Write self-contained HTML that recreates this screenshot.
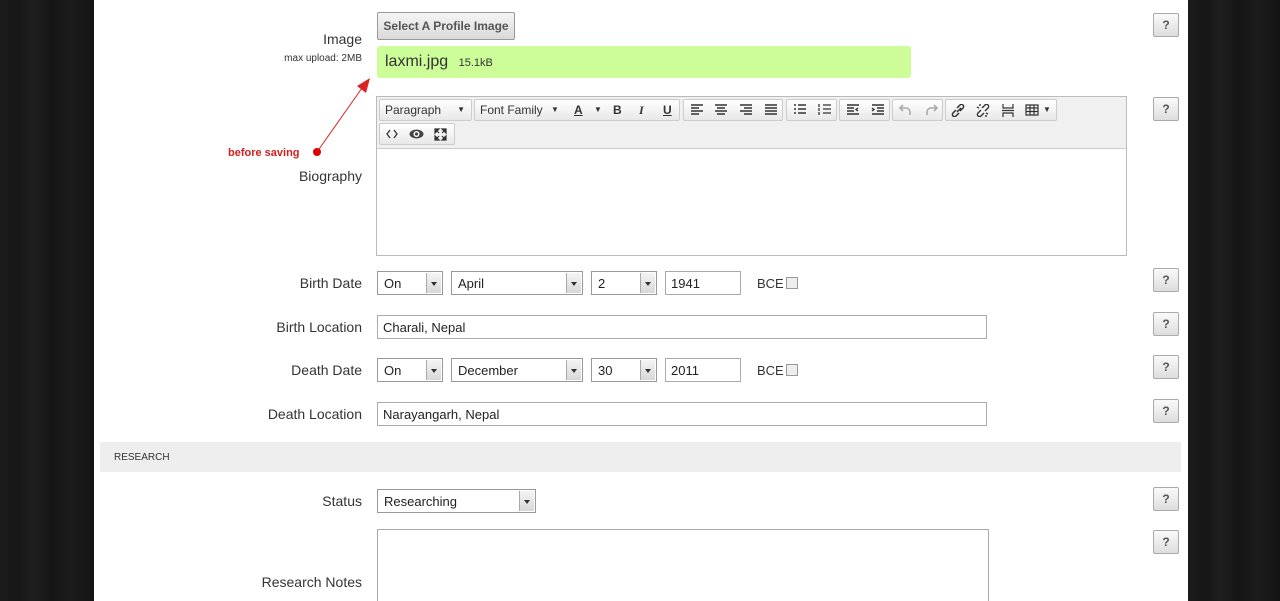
<!DOCTYPE html>
<html><head><style>
*{box-sizing:border-box}
html,body{margin:0;width:1280px;height:601px;overflow:hidden}
body{background:#1b1a1a;font-family:"Liberation Sans",sans-serif;position:relative}
#w{position:absolute;left:0;top:0;width:1280px;height:601px;overflow:hidden}
.wood{position:absolute;top:0;bottom:0;background:linear-gradient(90deg,#1c1b1b 0,#181717 20%,#201f1f 35%,#161515 55%,#1d1c1c 75%,#141313 100%)}
.main{position:absolute;left:94px;top:0;width:1094px;height:601px;background:#fff}
.a{position:absolute}
.lbl{position:absolute;right:918px;font-size:14px;color:#333;text-align:right;white-space:nowrap}
.help{position:absolute;left:1153px;width:26px;height:24px;border:1px solid #aaa;border-radius:2px;background:linear-gradient(#fafafa,#ddd);font-size:12px;font-weight:bold;color:#555;text-align:center;line-height:22px}
.inp{position:absolute;height:24px;border:1px solid #aaa;background:#fff;font-size:13px;color:#222;padding:4px 5px;line-height:15px}
.sel{position:absolute;height:24px;border:1px solid #999;background:#fff;font-size:13px;color:#222;padding:4px 6px;line-height:15px}
.sel:after{content:"";position:absolute;right:1px;top:1px;width:14px;height:20px;background:linear-gradient(#f4f4f4,#d8d8d8);border-left:1px solid #aaa}
.sel:before{content:"";position:absolute;right:5px;top:10px;border:3px solid transparent;border-top:4px solid #333;z-index:2}
.tb{position:absolute;height:22px;border:1px solid #ccc;border-radius:2px;background:linear-gradient(#fff,#e8e8e8);font-size:12px;color:#333;line-height:20px;white-space:nowrap;overflow:hidden}
.tb svg{position:absolute;top:4px}
</style></head><body><div id="w">
<div class="wood" style="left:0;width:94px"></div>
<div class="wood" style="left:1188px;width:92px"></div>
<div class="main"></div>

<div class="a" style="left:377px;top:12px;width:138px;height:28px;border:1px solid #999;border-radius:2px;background:linear-gradient(#f5f5f5,#d9d9d9);font-size:12px;font-weight:bold;color:#555;text-align:center;line-height:26px">Select A Profile Image</div>
<div class="lbl" style="top:31px">Image</div>
<div class="lbl" style="top:53px;font-size:10px">max upload: 2MB</div>
<div class="help" style="top:13px">?</div>
<div class="a" style="left:377px;top:46px;width:534px;height:32px;background:#ccfd99;border-radius:3px;font-size:16px;color:#333;padding:7px 8px">laxmi.jpg <span style="font-size:11px;margin-left:6px">15.1kB</span></div>

<svg class="a" style="left:300px;top:70px" width="80" height="95"><line x1="17" y1="82" x2="62" y2="18" stroke="#d22" stroke-width="1"/><polygon points="70,8 57,16 66,23" fill="#d22"/><circle cx="17" cy="82" r="4" fill="#d00"/></svg>
<div class="a" style="left:228px;top:147px;font-size:11px;font-weight:bold;color:#d02020">before saving</div>

<div class="a" style="left:376px;top:96px;width:751px;height:160px;border:1px solid #bbb;background:#fff"></div>
<div class="a" style="left:377px;top:97px;width:749px;height:52px;background:#f0f0f0;border-bottom:1px solid #ccc"></div>
<div class="tb" style="left:379px;top:99px;width:93px;padding-left:5px">Paragraph<span style="position:absolute;right:6px;top:0;font-size:8px">▼</span></div>
<div class="tb" style="left:474px;top:99px;width:206px;padding-left:5px">Font Family
<span style="position:absolute;left:76px;font-size:8px">▼</span>
<span style="position:absolute;left:99px;font-weight:bold;text-decoration:underline">A</span>
<span style="position:absolute;left:119px;font-size:8px">▼</span>
<span style="position:absolute;left:138px;font-weight:bold">B</span>
<span style="position:absolute;left:164px;font-style:italic;font-weight:bold;font-family:'Liberation Serif'">I</span>
<span style="position:absolute;left:188px;font-weight:bold;text-decoration:underline">U</span></div>
<div class="tb" style="left:683px;top:99px;width:100px">
<svg style="left:6px" width="14" height="12"><path d="M1 1h12M1 4h8M1 7h12M1 10h8" stroke="#333" stroke-width="1.6"/></svg>
<svg style="left:30px" width="14" height="12"><path d="M1 1h12M3 4h8M1 7h12M3 10h8" stroke="#333" stroke-width="1.6"/></svg>
<svg style="left:55px" width="14" height="12"><path d="M1 1h12M5 4h8M1 7h12M5 10h8" stroke="#333" stroke-width="1.6"/></svg>
<svg style="left:80px" width="14" height="12"><path d="M1 1h12M1 4h12M1 7h12M1 10h12" stroke="#333" stroke-width="1.6"/></svg></div>
<div class="tb" style="left:786px;top:99px;width:51px">
<svg style="left:6px" width="14" height="12"><path d="M1 1h2M5 1h8M1 5h2M5 5h8M1 9h2M5 9h8" stroke="#333" stroke-width="1.5"/></svg>
<svg style="left:31px" width="14" height="12"><path d="M1 0v3M1 4v3M1 8v3M5 1h8M5 5h8M5 9h8" stroke="#333" stroke-width="1.3"/></svg></div>
<div class="tb" style="left:839px;top:99px;width:51px">
<svg style="left:6px" width="14" height="12"><path d="M1 1h12M1 4h7M1 7h7M1 10h12M12 4l-2 1.5 2 1.5" stroke="#333" stroke-width="1.4" fill="none"/></svg>
<svg style="left:31px" width="14" height="12"><path d="M1 1h12M6 4h7M6 7h7M1 10h12M1 4l2 1.5-2 1.5" stroke="#333" stroke-width="1.4" fill="none"/></svg></div>
<div class="tb" style="left:892px;top:99px;width:51px">
<svg style="left:6px" width="14" height="12"><path d="M4 1L1 4l3 3M1 4h6a4 4 0 014 4v3" stroke="#aaa" stroke-width="1.6" fill="none"/></svg>
<svg style="left:31px" width="14" height="12"><path d="M10 1l3 3-3 3M13 4H7a4 4 0 00-4 4v3" stroke="#aaa" stroke-width="1.6" fill="none"/></svg></div>
<div class="tb" style="left:945px;top:99px;width:112px">
<svg style="left:5px" width="14" height="13"><path d="M6 8l4-4M5 6L2 9a2 2 0 003 3l3-3M9 7l3-3a2 2 0 00-3-3L6 4" stroke="#333" stroke-width="1.5" fill="none"/></svg>
<svg style="left:30px" width="14" height="13"><path d="M5 6L2 9a2 2 0 003 3l3-3M9 7l3-3a2 2 0 00-3-3L6 4M1 3l2 1M4 0l0 2M12 10l-2-1M10 13v-2" stroke="#333" stroke-width="1.4" fill="none"/></svg>
<svg style="left:55px" width="14" height="13"><path d="M2 0v4h10V0M1 6.5h12M2 13V9h10v4" stroke="#333" stroke-width="1.2" fill="none"/></svg>
<svg style="left:79px" width="14" height="12"><path d="M1 1h12v10H1zM1 4h12M1 7.5h12M5 1v10M9 1v10" stroke="#333" stroke-width="1.2" fill="none"/></svg>
<span style="position:absolute;left:97px;font-size:8px">▼</span></div>
<div class="tb" style="left:379px;top:123px;width:76px">
<svg style="left:6px;top:5px" width="12" height="10"><path d="M4 1L1 5l3 4M8 1l3 4-3 4" stroke="#333" stroke-width="1.3" fill="none"/></svg>
<svg style="left:29px;top:4px" width="15" height="12"><ellipse cx="7.5" cy="6" rx="7" ry="4.5" fill="#444"/><circle cx="7.5" cy="6" r="3" fill="#fff"/><circle cx="7.5" cy="6" r="1.6" fill="#444"/></svg>
<svg style="left:54px;top:4px" width="13" height="13"><path d="M1 1h4L1 5zM12 1H8l4 4zM1 12h4L1 8zM12 12H8l4-4zM3 3l2 2M10 3L8 5M3 10l2-2M10 10L8 8" stroke="#333" stroke-width="1.2" fill="#333"/></svg></div>
<div class="lbl" style="top:168px">Biography</div>
<div class="help" style="top:97px">?</div>

<div class="lbl" style="top:275px">Birth Date</div>
<div class="sel" style="left:377px;top:271px;width:66px">On</div>
<div class="sel" style="left:451px;top:271px;width:132px">April</div>
<div class="sel" style="left:591px;top:271px;width:66px">2</div>
<div class="inp" style="left:665px;top:271px;width:76px">1941</div>
<div class="a" style="left:757px;top:276px;font-size:13px;color:#333">BCE<span style="display:inline-block;width:12px;height:12px;border:1px solid #999;background:#eee;vertical-align:-1px;margin-left:2px"></span></div>
<div class="help" style="top:268px">?</div>

<div class="lbl" style="top:319px">Birth Location</div>
<div class="inp" style="left:377px;top:315px;width:610px">Charali, Nepal</div>
<div class="help" style="top:312px">?</div>

<div class="lbl" style="top:362px">Death Date</div>
<div class="sel" style="left:377px;top:358px;width:66px">On</div>
<div class="sel" style="left:451px;top:358px;width:132px">December</div>
<div class="sel" style="left:591px;top:358px;width:66px">30</div>
<div class="inp" style="left:665px;top:358px;width:76px">2011</div>
<div class="a" style="left:757px;top:363px;font-size:13px;color:#333">BCE<span style="display:inline-block;width:12px;height:12px;border:1px solid #999;background:#eee;vertical-align:-1px;margin-left:2px"></span></div>
<div class="help" style="top:355px">?</div>

<div class="lbl" style="top:406px">Death Location</div>
<div class="inp" style="left:377px;top:402px;width:610px">Narayangarh, Nepal</div>
<div class="help" style="top:399px">?</div>

<div class="a" style="left:100px;top:442px;width:1081px;height:30px;background:#eeeeee;font-size:10px;color:#333;padding:10px 14px">RESEARCH</div>

<div class="lbl" style="top:493px">Status</div>
<div class="sel" style="left:377px;top:489px;width:159px">Researching</div>
<div class="help" style="top:487px">?</div>

<div class="inp" style="left:377px;top:529px;width:612px;height:80px"></div>
<div class="lbl" style="top:574px">Research Notes</div>
<div class="help" style="top:530px">?</div>
</div></body></html>
